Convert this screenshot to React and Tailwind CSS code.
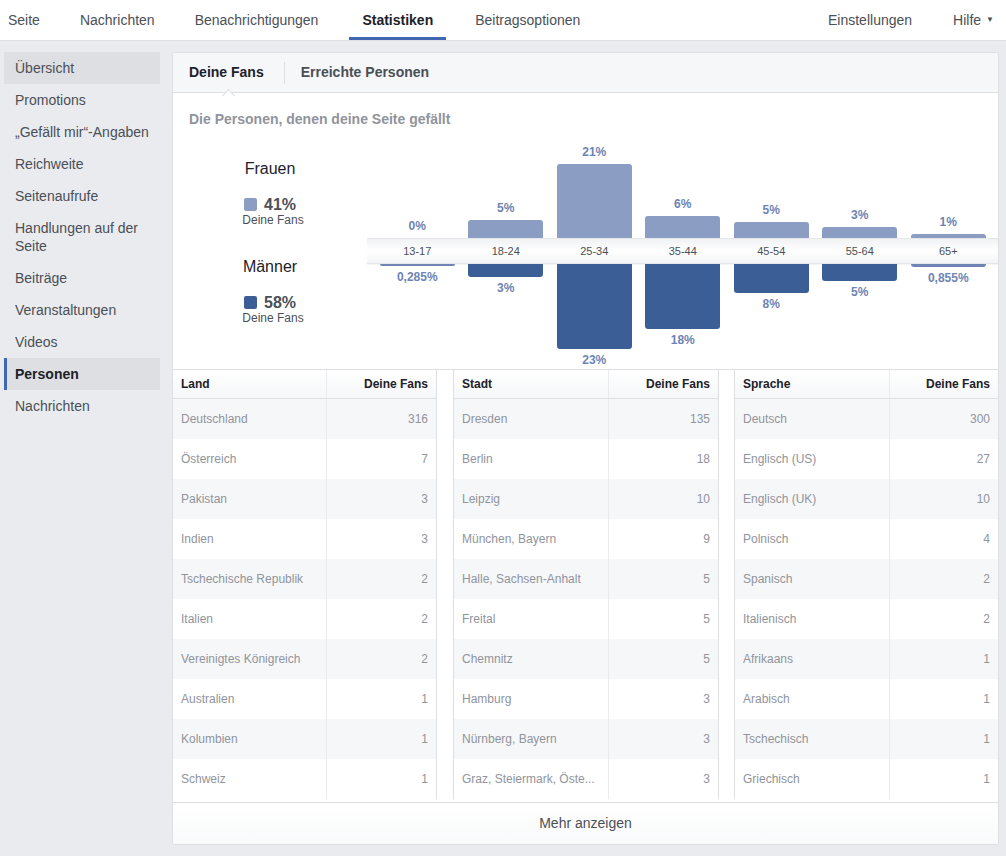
import { useState } from "react";

const navLeft = [
  { label: "Seite", ml: "" },
  { label: "Nachrichten", ml: "ml-[40px]" },
  { label: "Benachrichtigungen", ml: "ml-[40px]" },
  { label: "Statistiken", ml: "ml-[31px]" },
  { label: "Beitragsoptionen", ml: "ml-[42px]" },
];

const sideItems = [
  "Übersicht",
  "Promotions",
  "„Gefällt mir“-Angaben",
  "Reichweite",
  "Seitenaufrufe",
  "Handlungen auf der Seite",
  "Beiträge",
  "Veranstaltungen",
  "Videos",
  "Personen",
  "Nachrichten",
];

// heights in px, read off the chart
const ages = [
  { label: "13-17", f: "0%", fh: 0, m: "0,285%", mh: 2 },
  { label: "18-24", f: "5%", fh: 18, m: "3%", mh: 13 },
  { label: "25-34", f: "21%", fh: 74, m: "23%", mh: 85 },
  { label: "35-44", f: "6%", fh: 22, m: "18%", mh: 65 },
  { label: "45-54", f: "5%", fh: 16, m: "8%", mh: 29 },
  { label: "55-64", f: "3%", fh: 11, m: "5%", mh: 17 },
  { label: "65+", f: "1%", fh: 4, m: "0,855%", mh: 3 },
];

const tables = [
  {
    title: "Land",
    width: "w-[263px]",
    nameW: "w-[154px]",
    rows: [
      ["Deutschland", 316],
      ["Österreich", 7],
      ["Pakistan", 3],
      ["Indien", 3],
      ["Tschechische Republik", 2],
      ["Italien", 2],
      ["Vereinigtes Königreich", 2],
      ["Australien", 1],
      ["Kolumbien", 1],
      ["Schweiz", 1],
    ],
  },
  {
    title: "Stadt",
    width: "w-[264px]",
    nameW: "w-[155px]",
    rows: [
      ["Dresden", 135],
      ["Berlin", 18],
      ["Leipzig", 10],
      ["München, Bayern", 9],
      ["Halle, Sachsen-Anhalt", 5],
      ["Freital", 5],
      ["Chemnitz", 5],
      ["Hamburg", 3],
      ["Nürnberg, Bayern", 3],
      ["Graz, Steiermark, Öste...", 3],
    ],
  },
  {
    title: "Sprache",
    width: "w-[263px]",
    nameW: "w-[155px]",
    rows: [
      ["Deutsch", 300],
      ["Englisch (US)", 27],
      ["Englisch (UK)", 10],
      ["Polnisch", 4],
      ["Spanisch", 2],
      ["Italienisch", 2],
      ["Afrikaans", 1],
      ["Arabisch", 1],
      ["Tschechisch", 1],
      ["Griechisch", 1],
    ],
  },
];

const TopNav = () => (
  <div className="h-[41px] bg-white border-b border-[#dddfe2] flex items-stretch justify-between text-[14px] text-[#4b4f56]">
    <div className="flex items-stretch pl-[8px]">
      {navLeft.map((item) => (
        <div
          key={item.label}
          className={
            item.label === "Statistiken"
              ? `${item.ml} -mr-[13px] px-[13px] flex items-center pt-[3px] border-b-[3px] border-[#4267b2] font-bold text-[#1d2129]`
              : `${item.ml} flex items-center`
          }
        >
          {item.label}
        </div>
      ))}
    </div>
    <div className="flex items-center gap-[41px] pr-[12px]">
      <span>Einstellungen</span>
      <span className="flex items-center gap-[5px]">
        Hilfe <span className="text-[8px] leading-none">▼</span>
      </span>
    </div>
  </div>
);

const Sidebar = () => (
  <div className="w-[156px] shrink-0 flex flex-col text-[14px] leading-[18px] text-[#4b4f56]">
    {sideItems.map((item) => {
      const active = item === "Personen";
      const hover = item === "Übersicht";
      return (
        <div
          key={item}
          className={`py-[7px] pr-[8px] ${
            active
              ? "bg-[#dddfe2] border-l-[3px] border-[#4267b2] pl-[8px] font-bold text-[#1d2129]"
              : hover
              ? "bg-[#dddfe2] pl-[11px]"
              : "pl-[11px]"
          }`}
        >
          {item}
        </div>
      );
    })}
  </div>
);

const Legend = ({ title, pct, color, mt }) => (
  <div className={`flex flex-col items-center ${mt}`}>
    <div className="text-[16px] leading-[19px] text-[#1d2129]">{title}</div>
    <div className="mt-[17px] flex items-center gap-[7px]">
      <span className={`w-[13px] h-[13px] rounded-[2px] ${color}`} />
      <span className="text-[16px] leading-[19px] font-bold text-[#4b4f56]">{pct}</span>
    </div>
    <div className="-mt-[1px] pl-[6px] text-[12px] leading-[14px] text-[#4b4f56]">Deine Fans</div>
  </div>
);

const AgeChart = () => (
  <div className="flex-1 flex flex-col">
    <div className="h-[110px] flex items-end pl-[6px]">
      {ages.map((a) => (
        <div key={a.label} className="w-[88.5px] flex flex-col items-center">
          <div className="mb-[5px] text-[12px] leading-[14px] font-bold text-[#6d84b4]">{a.f}</div>
          <div className="w-[75px] bg-[#8b9dc3] rounded-t-[3px]" style={{ height: a.fh }} />
        </div>
      ))}
    </div>
    <div className="h-[26px] flex items-center pl-[6px] border-y border-[#e5e6e9] bg-gradient-to-b from-[#f1f2f4] via-white to-[#f3f4f6] shadow-[0_1px_1px_rgba(0,0,0,0.04)]">
      {ages.map((a) => (
        <div key={a.label} className="w-[88.5px] text-center text-[11px] text-[#4b4f56]">
          {a.label}
        </div>
      ))}
    </div>
    <div className="h-[105px] flex items-start pl-[6px]">
      {ages.map((a) => (
        <div key={a.label} className="w-[88.5px] flex flex-col items-center">
          <div
            className={`w-[75px] rounded-b-[3px] ${a.mh < 4 ? "bg-[#6d84b4]" : "bg-[#3b5e96]"}`}
            style={{ height: a.mh }}
          />
          <div className="mt-[4px] text-[12px] leading-[14px] font-bold text-[#6d84b4]">{a.m}</div>
        </div>
      ))}
    </div>
  </div>
);

const FanTable = ({ table }) => (
  <div className={`${table.width} shrink-0 flex flex-col`}>
    <div className="h-[29px] flex border-b border-[#dddfe2] bg-gradient-to-b from-white to-[#f6f7f9] text-[12px] font-bold text-[#1d2129]">
      <div className={`${table.nameW} border-r border-[#e9ebee] px-[8px] flex items-center`}>{table.title}</div>
      <div className="flex-1 px-[8px] flex items-center justify-end">Deine Fans</div>
    </div>
    {table.rows.map(([name, n], i) => (
      <div
        key={name}
        className={`h-[40px] flex text-[12px] text-[#90949c] ${i % 2 === 0 ? "bg-[#f6f7f9]" : "bg-white"}`}
      >
        <div className={`${table.nameW} border-r border-[#e9ebee] px-[8px] flex items-center whitespace-nowrap overflow-hidden`}>
          {name}
        </div>
        <div className="flex-1 px-[8px] flex items-center justify-end">{n}</div>
      </div>
    ))}
    <div className="flex-1 flex">
      <div className={`${table.nameW} border-r border-[#e9ebee]`} />
    </div>
  </div>
);

const Panel = () => {
  const [tab, setTab] = useState("fans");
  return (
    <div className="w-[827px] shrink-0 bg-white border border-[#dddfe2] rounded-[3px] flex flex-col">
      <div className="relative h-[40px] shrink-0 bg-[#f6f7f9] border-b border-[#dddfe2] rounded-t-[3px] flex items-center pl-[16px] text-[14px] font-bold">
        <button
          onClick={() => setTab("fans")}
          className={`relative pr-[20px] h-[22px] flex items-center border-r border-[#dddfe2] ${
            tab === "fans" ? "text-[#1d2129]" : "text-[#4b4f56]"
          }`}
        >
          Deine Fans
          {tab === "fans" && (
            <span className="absolute left-[35px] top-[29px] w-[9px] h-[9px] rotate-45 bg-white border-l border-t border-[#dddfe2]" />
          )}
        </button>
        <button
          onClick={() => setTab("reach")}
          className={`pl-[16px] h-[22px] flex items-center ${tab === "reach" ? "text-[#1d2129]" : "text-[#4b4f56]"}`}
        >
          Erreichte Personen
        </button>
      </div>

      <div className="h-[276px] shrink-0 flex flex-col">
        <div className="pt-[17px] px-[16px] text-[14px] leading-[18px] font-bold text-[#90949c]">
          Die Personen, denen deine Seite gefällt
        </div>
        <div className="flex-1 flex">
          <div className="w-[194px] shrink-0 flex flex-col">
            <Legend title="Frauen" pct="41%" color="bg-[#8b9dc3]" mt="mt-[31px]" />
            <Legend title="Männer" pct="58%" color="bg-[#3b5e96]" mt="mt-[30px]" />
          </div>
          <AgeChart />
        </div>
      </div>

      <div className="flex border-t border-[#dddfe2] pb-[3px]">
        <FanTable table={tables[0]} />
        <div className="w-[18px] shrink-0 border-x border-[#dddfe2]" />
        <FanTable table={tables[1]} />
        <div className="w-[17px] shrink-0 border-x border-[#dddfe2]" />
        <FanTable table={tables[2]} />
      </div>

      <div className="h-[42px] border-t border-[#dddfe2] bg-gradient-to-b from-white to-[#f9fafb] rounded-b-[3px] flex items-center justify-center text-[14px] text-[#4b4f56]">
        Mehr anzeigen
      </div>
    </div>
  );
};

export default function App() {
  return (
    <div className="min-h-[856px] bg-[#e9ebee] font-['Liberation_Sans',Arial,sans-serif]">
      <TopNav />
      <div className="flex gap-[12px] pt-[11px] pl-[4px]">
        <Sidebar />
        <Panel />
      </div>
    </div>
  );
}
